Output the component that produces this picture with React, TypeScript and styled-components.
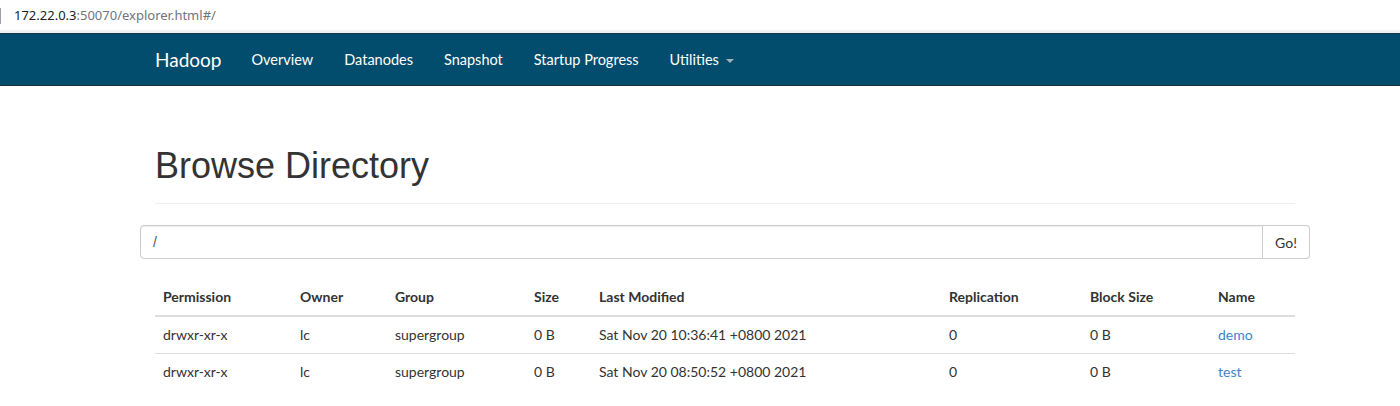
import React from "react";
import styled, { createGlobalStyle } from "styled-components";

const Global = createGlobalStyle`
  html, body { margin: 0; padding: 0; background: #fff; }
  body { font-family: Lato, "Open Sans", sans-serif; color: #333; }
`;

const UrlBar = styled.div`
  height: 30px;
  display: flex;
  align-items: center;
  padding-left: 14px;
  position: relative;
  font-family: "Noto Sans", "Open Sans", sans-serif;
  font-size: 13px;
  color: #202124;
  border-bottom: 3px solid #f1f3f4;
  &::before {
    content: "";
    position: absolute;
    left: 0;
    top: 8px;
    width: 1px;
    height: 16px;
    background: #9aa0a6;
  }
`;

const UrlMuted = styled.span`
  color: #70757a;
`;

const Navbar = styled.nav`
  height: 51px;
  background: #024d6d;
  border-top: 1px solid #1c3746;
  border-bottom: 1px solid #17303d;
  display: flex;
`;

const NavInner = styled.div`
  width: 1170px;
  margin-left: calc((100% - 1170px) / 2 + 40px);
  display: flex;
  align-items: center;
`;

const Brand = styled.a`
  font-family: Lato, sans-serif;
  font-size: 19px;
  color: #fff;
  margin-right: 30px;
  text-decoration: none;
`;

const NavLink = styled.a`
  font-family: Lato, sans-serif;
  font-size: 14.5px;
  color: #fff;
  margin-right: 31px;
  text-decoration: none;
  display: flex;
  align-items: center;
`;

const Caret = styled.span`
  display: inline-block;
  margin-left: 7px;
  width: 0;
  height: 0;
  border-left: 4px solid transparent;
  border-right: 4px solid transparent;
  border-top: 4px solid #9fb4c0;
  margin-top: 2px;
`;

const Container = styled.main`
  width: 1170px;
  margin-left: calc((100% - 1170px) / 2 + 25px);
`;

const Section = styled.div`
  padding: 0 15px;
`;

const Title = styled.h1`
  font-family: "Liberation Sans", Arial, sans-serif;
  font-weight: 400;
  font-size: 36px;
  color: #333;
  margin: 60px 0 0;
  line-height: 40px;
  padding-bottom: 17px;
  border-bottom: 1px solid #eee;
`;

const InputGroup = styled.div`
  margin-top: 21px;
  display: flex;
  height: 34px;
  box-sizing: border-box;
`;

const PathInput = styled.div`
  flex: 1;
  border: 1px solid #ccc;
  border-radius: 4px 0 0 4px;
  font-family: "Liberation Sans", Arial, sans-serif;
  font-size: 14px;
  color: #555;
  display: flex;
  align-items: center;
  padding-left: 12px;
  box-shadow: inset 0 1px 1px rgba(0, 0, 0, 0.075);
`;

const GoButton = styled.button`
  width: 47px;
  border: 1px solid #ccc;
  border-left: none;
  border-radius: 0 4px 4px 0;
  background: #fff;
  font-family: Lato, sans-serif;
  font-size: 14px;
  color: #333;
  padding: 0;
`;

const Table = styled.table`
  margin-top: 19px;
  width: 1140px;
  border-collapse: collapse;
  table-layout: fixed;
  font-family: Lato, sans-serif;
  font-size: 14px;
`;

const Th = styled.th`
  text-align: left;
  font-weight: 700;
  color: #333;
  padding: 8px 8px;
  height: 21px;
  line-height: 20px;
  border-bottom: 2px solid #ddd;
`;

const Td = styled.td`
  padding: 8px 8px;
  line-height: 20px;
  color: #333;
  border-top: 1px solid #ddd;
`;

const NameLink = styled.a`
  color: #3c85c8;
  text-decoration: none;
`;

const columns = [
  { label: "Permission", width: 137 },
  { label: "Owner", width: 95 },
  { label: "Group", width: 139 },
  { label: "Size", width: 65 },
  { label: "Last Modified", width: 350 },
  { label: "Replication", width: 141 },
  { label: "Block Size", width: 128 },
  { label: "Name", width: 85 },
];

const rows = [
  ["drwxr-xr-x", "lc", "supergroup", "0 B", "Sat Nov 20 10:36:41 +0800 2021", "0", "0 B", "demo"],
  ["drwxr-xr-x", "lc", "supergroup", "0 B", "Sat Nov 20 08:50:52 +0800 2021", "0", "0 B", "test"],
];

export default function App() {
  return (
    <>
      <Global />
      <UrlBar>
        172.22.0.3<UrlMuted>:50070/explorer.html#/</UrlMuted>
      </UrlBar>
      <Navbar>
        <NavInner>
          <Brand>Hadoop</Brand>
          <NavLink>Overview</NavLink>
          <NavLink>Datanodes</NavLink>
          <NavLink>Snapshot</NavLink>
          <NavLink>Startup Progress</NavLink>
          <NavLink>
            Utilities
            <Caret />
          </NavLink>
        </NavInner>
      </Navbar>
      <Container>
        <Section>
          <Title>Browse Directory</Title>
        </Section>
        <InputGroup>
          <PathInput>/</PathInput>
          <GoButton>Go!</GoButton>
        </InputGroup>
        <Section>
          <Table>
            <colgroup>
              {columns.map((c) => (
                <col key={c.label} style={{ width: c.width }} />
              ))}
            </colgroup>
            <thead>
              <tr>
                {columns.map((c) => (
                  <Th key={c.label}>{c.label}</Th>
                ))}
              </tr>
            </thead>
            <tbody>
              {rows.map((r, i) => (
                <tr key={i}>
                  {r.map((v, j) => (
                    <Td key={j}>{j === 7 ? <NameLink>{v}</NameLink> : v}</Td>
                  ))}
                </tr>
              ))}
            </tbody>
          </Table>
        </Section>
      </Container>
    </>
  );
}
